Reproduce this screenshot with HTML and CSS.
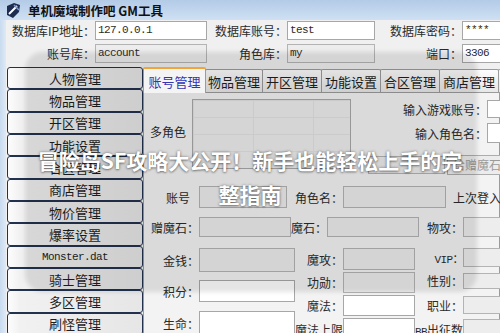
FILE: index.html
```html
<!DOCTYPE html>
<html lang="zh-CN">

<head>
    <meta charset="UTF-8">
    <meta name="viewport" content="width=device-width, initial-scale=1.0">
    <title>单机魔域制作吧 GM工具</title>
    <link rel="stylesheet" href="styles.css">
</head>

<body>
    <div class="screen">
        <div class="titlebar">
            <svg class="app-icon" width="17" height="17" viewBox="0 0 17 17">
                <path d="M2 4 L9 1 L15 3 L14 10 L8 16 L2 13 Z" fill="#1d2c4f" />
                <path d="M4 12 L12 4" stroke="#ffffff" stroke-width="2" />
                <path d="M9 3 L14 8" stroke="#7b9bd0" stroke-width="1.5" />
            </svg>
            <span class="title">单机魔域制作吧 GM工具</span>
        </div>

        <div class="frame">
            <div class="frame-edge"></div>
            <div class="client">
                <!-- database settings -->
                <div class="db-row">
                    <span class="db-label w89">数据库IP地址：</span>
                    <div class="field mono w112">127.0.0.1</div>
                    <span class="db-label w80">数据库账号：</span>
                    <div class="field mono w88">test</div>
                    <span class="db-label w87">数据库密码：</span>
                    <div class="field mono w60">****</div>
                </div>
                <div class="db-row">
                    <span class="db-label w89">账号库：</span>
                    <div class="field off mono w112">account</div>
                    <span class="db-label w80">角色库：</span>
                    <div class="field off mono w88">my</div>
                    <span class="db-label w87">端口：</span>
                    <div class="field mono w60">3306</div>
                </div>

                <div class="main">
                    <div class="side-menu">
                        <div class="menu-btn">人物管理</div>
                        <div class="menu-btn">物品管理</div>
                        <div class="menu-btn">开区管理</div>
                        <div class="menu-btn">功能设置</div>
                        <div class="menu-btn">合区管理</div>
                        <div class="menu-btn">商店管理</div>
                        <div class="menu-btn">物价管理</div>
                        <div class="menu-btn">爆率设置</div>
                        <div class="menu-btn mono">Monster.dat</div>
                        <div class="menu-btn">骑士管理</div>
                        <div class="menu-btn">多区管理</div>
                        <div class="menu-btn">刷怪管理</div>
                    </div>

                    <div class="tabs">
                        <div class="tab-strip">
                            <div class="tab active">账号管理</div>
                            <div class="tab w58">物品管理</div>
                            <div class="tab">开区管理</div>
                            <div class="tab">功能设置</div>
                            <div class="tab">合区管理</div>
                            <div class="tab">商店管理</div>
                            <div class="tab">爆率设置</div>
                        </div>

                        <div class="tab-panel">
                            <div class="panel-top">
                                <span class="multi-label">多角色</span>
                                <div class="role-list"></div>
                                <div class="lookup">
                                    <div class="lookup-row first">
                                        <span class="cell-label w119">输入游戏账号：</span>
                                        <div class="field w40 h18"></div>
                                    </div>
                                    <div class="lookup-row second">
                                        <span class="cell-label w119">输入角色名：</span>
                                        <div class="field w40 h20"></div>
                                    </div>
                                    <div class="lookup-row third">
                                        <div class="field off w77 h18"></div>
                                        <div class="gift-btn">给赠魔石</div>
                                    </div>
                                </div>
                            </div>

                            <div class="form-row account-row">
                                <span class="cell-label w55 pad9">账号</span>
                                <div class="field off w88 h22"></div>
                                <span class="cell-label w56">角色名：</span>
                                <div class="field off w103 h22"></div>
                                <span class="last-login">上次登入</span>
                            </div>
                            <div class="form-row gem-row">
                                <span class="cell-label w55">赠魔石：</span>
                                <div class="field off w92 h20"></div>
                                <span class="cell-label w36">魔石：</span>
                                <div class="field off w92 h20"></div>
                                <span class="cell-label w44">物攻：</span>
                                <div class="field off w60 h20"></div>
                            </div>

                            <div class="lower">
                                <div class="col col-left">
                                    <div class="form-row">
                                        <span class="cell-label w55">金钱：</span>
                                        <div class="field off w96 h24"></div>
                                    </div>
                                    <div class="form-row mt8">
                                        <span class="cell-label w55">积分：</span>
                                        <div class="field w96 h22"></div>
                                    </div>
                                    <div class="form-row mt9">
                                        <span class="cell-label w55">生命：</span>
                                        <div class="field w96 h24"></div>
                                    </div>
                                </div>
                                <div class="col col-mid">
                                    <div class="form-row">
                                        <span class="cell-label w48">魔攻：</span>
                                        <div class="field off w72 h22"></div>
                                    </div>
                                    <div class="form-row mt2">
                                        <span class="cell-label w48">功勋：</span>
                                        <div class="field off w72 h21"></div>
                                    </div>
                                    <div class="form-row mt2">
                                        <span class="cell-label w48">魔法：</span>
                                        <div class="field w72 h21"></div>
                                    </div>
                                    <div class="form-row mt2">
                                        <span class="cell-label w48">魔法上限</span>
                                        <div class="field w72 h22"></div>
                                    </div>
                                </div>
                                <div class="col col-right">
                                    <div class="form-row">
                                        <span class="cell-label w48 mono">VIP：</span>
                                        <div class="field off w60 h19"></div>
                                    </div>
                                    <div class="form-row mt5">
                                        <span class="cell-label w48">性别：</span>
                                        <div class="field off w60 h16"></div>
                                    </div>
                                    <div class="form-row mt7">
                                        <span class="cell-label w48">职业：</span>
                                        <div class="field off w60 h18"></div>
                                    </div>
                                    <div class="form-row mt5">
                                        <span class="cell-label w48"><span class="mono">BB</span>出征数</span>
                                        <div class="field off w60 h20"></div>
                                    </div>
                                </div>
                            </div>
                        </div>
                    </div>
                </div>
            </div>
        </div>

        <div class="veil"></div>
        <h1 class="caption">冒险岛SF攻略大公开！新手也能轻松上手的完整指南</h1>
    </div>
</body>

</html>
```

FILE: styles.css
```css
body {
    margin: 0;
    width: 500px;
    height: 333px;
    overflow: hidden;
    background: #f0f0f0;
    font-family: "Noto Sans CJK SC", sans-serif;
    font-size: 12px;
    color: #2b2b2b;
}

.screen {
    position: relative;
    width: 500px;
    height: 333px;
    overflow: hidden;
}

.mono {
    font-family: "Liberation Mono", "Noto Sans CJK SC", monospace;
    font-size: 11px;
    letter-spacing: -0.6px;
}

/* title bar */
.titlebar {
    height: 20px;
    display: flex;
    align-items: center;
    gap: 6px;
    padding-left: 5px;
    background: linear-gradient(#b3cbe7, #cfe0f3);
}

.app-icon {
    flex: none;
}

.title {
    font-weight: bold;
    font-size: 12.5px;
    color: #111;
}

.frame {
    display: flex;
    height: 313px;
}

.frame-edge {
    flex: none;
    width: 6px;
    background: linear-gradient(to right, #c8dbef, #dfe9f4);
}

.client {
    flex: 1;
    min-width: 0;
    overflow: hidden;
    padding-top: 1px;
}

/* database rows */
.db-row {
    display: flex;
    align-items: center;
    height: 19px;
    white-space: nowrap;
}

.db-row + .db-row {
    margin-top: 4px;
}

.db-label,
.cell-label {
    flex: none;
    text-align: right;
    white-space: nowrap;
}

.field {
    flex: none;
    box-sizing: border-box;
    height: 19px;
    border: 1px solid #a7a7a7;
    background: #fff;
    padding-left: 2px;
    line-height: 17px;
    overflow: hidden;
    white-space: nowrap;
}

.field.off {
    background: #ededed;
    border-color: #b4b4b4;
}

.w36 { width: 36px; }
.w40 { width: 40px; }
.w44 { width: 44px; }
.w48 { width: 48px; }
.w55 { width: 55px; }
.w56 { width: 56px; }
.w60 { width: 60px; }
.w72 { width: 72px; }
.w77 { width: 77px; }
.w80 { width: 80px; }
.w87 { width: 87px; }
.w88 { width: 88px; }
.w89 { width: 89px; }
.w92 { width: 92px; }
.w96 { width: 96px; }
.w103 { width: 103px; }
.w112 { width: 112px; }
.w119 { width: 119px; }

.h16 { height: 16px; }
.h18 { height: 18px; }
.h19 { height: 19px; }
.h20 { height: 20px; }
.h21 { height: 21px; }
.h22 { height: 22px; }
.h24 { height: 24px; }

.mt2 { margin-top: 2px; }
.mt5 { margin-top: 5px; }
.mt7 { margin-top: 7px; }
.mt8 { margin-top: 8px; }
.mt9 { margin-top: 9px; }

.pad9 {
    box-sizing: border-box;
    padding-right: 9px;
}

/* main area */
.main {
    display: flex;
    margin-top: 4px;
    margin-left: 1px;
}

.side-menu {
    flex: none;
    width: 136px;
    height: 268px;
    display: flex;
    flex-direction: column;
}

.menu-btn {
    flex: 1;
    box-sizing: border-box;
    display: flex;
    align-items: center;
    justify-content: center;
    border: 1px solid #22324e;
    border-radius: 3px;
    background: linear-gradient(to right, #fdfdfd 0, #f1f1f1 12px, #e6e6e6);
    font-size: 13px;
    color: #1e1e1e;
}

.menu-btn.mono {
    font-size: 11px;
}

.tabs {
    flex: 1;
    min-width: 0;
    display: flex;
    flex-direction: column;
}

.tab-strip {
    display: flex;
    align-items: flex-end;
    height: 25px;
}

.tab {
    flex: none;
    position: relative;
    box-sizing: border-box;
    width: 60px;
    height: 23px;
    margin-right: -1px;
    display: flex;
    align-items: center;
    justify-content: center;
    border: 1px solid #9b9b9b;
    border-bottom: none;
    border-radius: 2px 2px 0 0;
    background: linear-gradient(#fdfdfd, #e7e7e7);
    font-size: 13px;
    color: #1f1f1f;
    white-space: nowrap;
}

.tab.w58 {
    width: 58px;
}

.tab.active {
    width: 63px;
    height: 26px;
    margin-bottom: -1px;
    z-index: 1;
    border-top: 2px solid #f0a43a;
    background: #f4f4f4;
    color: #3535b2;
}

.tab-panel {
    height: 260px;
    border: 1px solid #9b9b9b;
    background: #f3f3f3;
}

.panel-top {
    display: flex;
    align-items: flex-start;
    margin-top: 6px;
}

.multi-label {
    flex: none;
    width: 42px;
    margin-left: 6px;
    margin-top: 24px;
}

.role-list {
    flex: none;
    box-sizing: border-box;
    width: 159px;
    height: 70px;
    border: 1px solid #a9a9a9;
    background-color: #eeeeee;
    background-image:
        linear-gradient(#e2e2e2 1px, transparent 1px),
        linear-gradient(to right, #e2e2e2 1px, transparent 1px);
    background-size: 100% 17px, 60px 100%;
}

.lookup {
    flex: none;
    margin-left: 17px;
    display: flex;
    flex-direction: column;
}

.lookup-row {
    display: flex;
    align-items: center;
}

.lookup-row .cell-label {
    padding-right: 0;
}

.lookup-row.first {
    margin-top: 1px;
}

.lookup-row.second {
    margin-top: 5px;
}

.lookup-row.third {
    margin-top: 12px;
    gap: 2px;
}

.gift-btn {
    flex: none;
    box-sizing: border-box;
    width: 65px;
    height: 20px;
    padding-left: 5px;
    border: 1px solid #adadad;
    background: #ececec;
    color: #9a9a9a;
    line-height: 18px;
    white-space: nowrap;
}

.form-row {
    display: flex;
    align-items: center;
    white-space: nowrap;
}

.account-row {
    margin-top: 11px;
}

.gem-row {
    margin-top: 9px;
}

.last-login {
    margin-left: 7px;
}

.lower {
    display: flex;
    align-items: flex-start;
    margin-top: 11px;
}

.col {
    flex: none;
    display: flex;
    flex-direction: column;
}

.col-left {
    width: 151px;
}

.col-mid {
    width: 120px;
}

/* overlay */
.veil {
    position: absolute;
    left: 25px;
    top: 52px;
    width: 452px;
    height: 240px;
    border-radius: 18px;
    background: rgba(0, 0, 0, 0.1);
    filter: blur(2px);
}

.caption {
    position: absolute;
    top: 143px;
    left: 30px;
    width: 440px;
    margin: 0;
    text-align: center;
    font-family: "Noto Sans CJK SC", sans-serif;
    font-weight: bold;
    font-size: 21px;
    line-height: 34px;
    color: #fff;
    text-shadow: 0 0 3px rgba(0, 0, 0, 0.45), 0 1px 2px rgba(0, 0, 0, 0.3);
}
```
